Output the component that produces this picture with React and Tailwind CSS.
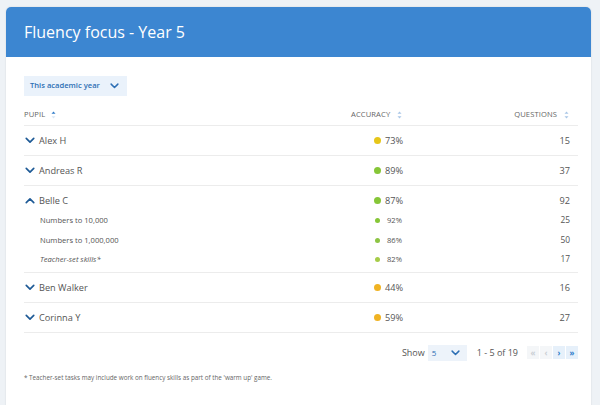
import React from "react";

const Chevron = ({ up = false, className = "" }) => (
  <svg viewBox="0 0 12 8" className={className} fill="none" stroke="currentColor" strokeWidth="2" strokeLinecap="round" strokeLinejoin="round">
    {up ? <path d="M1.5 6.5 6 2l4.5 4.5" /> : <path d="M1.5 1.5 6 6l4.5-4.5" />}
  </svg>
);

const SortBoth = () => (
  <svg viewBox="0 0 6 10" className="w-[5px] h-[8px]">
    <path d="M3 0.5 5.5 3.5H0.5Z" fill="#a9c6e6" />
    <path d="M3 9.5 5.5 6.5H0.5Z" fill="#a9c6e6" />
  </svg>
);

const SortUp = () => (
  <svg viewBox="0 0 6 10" className="w-[5px] h-[8px]">
    <path d="M3 0.5 5.5 3.5H0.5Z" fill="#2f7bc8" />
    <path d="M3 9.5 5.5 6.5H0.5Z" fill="#d9e6f4" />
  </svg>
);

const Dot = ({ color, small }) => (
  <span className={`rounded-full shrink-0 ${small ? "w-[5px] h-[5px] mr-[7px]" : "w-[7px] h-[7px] mr-[4px]"}`} style={{ backgroundColor: color }} />
);

const rows = [
  { name: "Alex H", acc: "73%", q: "15", color: "#e6c619" },
  { name: "Andreas R", acc: "89%", q: "37", color: "#86c637" },
  {
    name: "Belle C", acc: "87%", q: "92", color: "#86c637", open: true,
    subs: [
      { name: "Numbers to 10,000", acc: "92%", q: "25", color: "#86c637" },
      { name: "Numbers to 1,000,000", acc: "86%", q: "50", color: "#8dc444" },
      { name: "Teacher-set skills*", acc: "82%", q: "17", color: "#a6cc48", italic: true },
    ],
  },
  { name: "Ben Walker", acc: "44%", q: "16", color: "#f0b323" },
  { name: "Corinna Y", acc: "59%", q: "27", color: "#f0b323" },
];

export default function App() {
  return (
    <div className="w-[600px] h-[405px] overflow-hidden bg-[#eef2f6] pt-[7px] pl-[6px] pr-[9px]" style={{ fontFamily: '"Open Sans", "Noto Sans", sans-serif' }}>
      <div className="h-[420px] bg-white rounded-t-[5px] shadow-[0_0_2px_rgba(0,0,0,0.12)] flex flex-col">
        <div className="h-[50px] bg-[#3c86d1] rounded-t-[5px] flex items-center pl-[18px]">
          <h1 className="text-white text-[16px] font-medium leading-none">Fluency focus - Year 5</h1>
        </div>
        <div className="pl-[18px] pr-[13px] pt-[19px]">
          <div className="w-[103px] h-[20px] bg-[#eaf2fb] flex items-center justify-between pl-[6px] pr-[8px] text-[#2d6fb4]">
            <span className="text-[7.6px] font-semibold">This academic year</span>
            <Chevron className="w-[9px] h-[6px] text-[#2d6fb4]" />
          </div>
          <div className="h-[30px] flex items-end pb-[5px] border-b border-[#ececec] text-[7.6px] text-[#666] tracking-[0.1px]">
            <div className="flex-1 flex items-center gap-[6px] h-[10px]">
              <span>PUPIL</span>
              <SortUp />
            </div>
            <div className="w-[86px] flex items-center gap-[7px] h-[10px]">
              <span>ACCURACY</span>
              <SortBoth />
            </div>
            <div className="w-[141px] flex items-center justify-end gap-[7px] pr-[9px] h-[10px]">
              <span>QUESTIONS</span>
              <SortBoth />
            </div>
          </div>
          {rows.map((r) => (
            <div key={r.name} className={`border-b border-[#ececec] ${r.open ? "h-[87px] pt-[7px]" : "h-[30px]"} text-[#555]`}>
              <div className={`flex items-center ${r.open ? "h-[16px]" : "h-[29px]"} text-[9.2px]`}>
                <div className="flex-1 flex items-center">
                  <Chevron up={r.open} className="w-[10px] h-[7px] text-[#1e5a96] mr-[4px] ml-[1px]" />
                  <span>{r.name}</span>
                </div>
                <div className="w-[80px] flex items-center pl-[17px]">
                  <Dot color={r.color} />
                  <span>{r.acc}</span>
                </div>
                <div className="w-[141px] text-right pr-[8px]">{r.q}</div>
              </div>
              {r.subs && r.subs.map((s, i) => (
                <div key={s.name} className={`flex items-center h-[19.5px] text-[7.6px] text-[#555] ${i === 0 ? "mt-[2px]" : ""}`}>
                  <div className={`flex-1 pl-[16px] ${s.italic ? "italic" : ""}`}>{s.name}</div>
                  <div className="w-[80px] flex items-center pl-[18px]">
                    <Dot color={s.color} small />
                    <span>{s.acc}</span>
                  </div>
                  <div className="w-[141px] text-right pr-[8px] text-[8.4px]">{s.q}</div>
                </div>
              ))}
            </div>
          ))}
          <div className="flex items-center justify-end h-[28px] pt-[11px] text-[9px] text-[#555]">
            <span className="mr-[3px]">Show</span>
            <div className="w-[39px] h-[16px] bg-[#edf3fa] flex items-center justify-between pl-[4px] pr-[7px] text-[#2d6fb4] text-[8px]">
              <span>5</span>
              <Chevron className="w-[9px] h-[6px]" />
            </div>
            <span className="ml-[10px] mr-[9px]">1 - 5 of 19</span>
            <div className="flex items-center gap-[1px] text-[8px] font-bold">
              <span className="w-[12px] h-[13px] bg-[#f4f6f8] flex items-center justify-center text-[#c9ced4]">«</span>
              <span className="w-[12px] h-[13px] bg-[#f4f6f8] flex items-center justify-center text-[#c9ced4]">‹</span>
              <span className="w-[12px] h-[13px] bg-[#e6f0fa] flex items-center justify-center text-[#2f7bc8]">›</span>
              <span className="w-[12px] h-[13px] bg-[#e6f0fa] flex items-center justify-center text-[#2f7bc8]">»</span>
            </div>
          </div>
          <p className="mt-[12px] text-[6.3px] text-[#666]">* Teacher-set tasks may include work on fluency skills as part of the 'warm up' game.</p>
        </div>
      </div>
    </div>
  );
}
